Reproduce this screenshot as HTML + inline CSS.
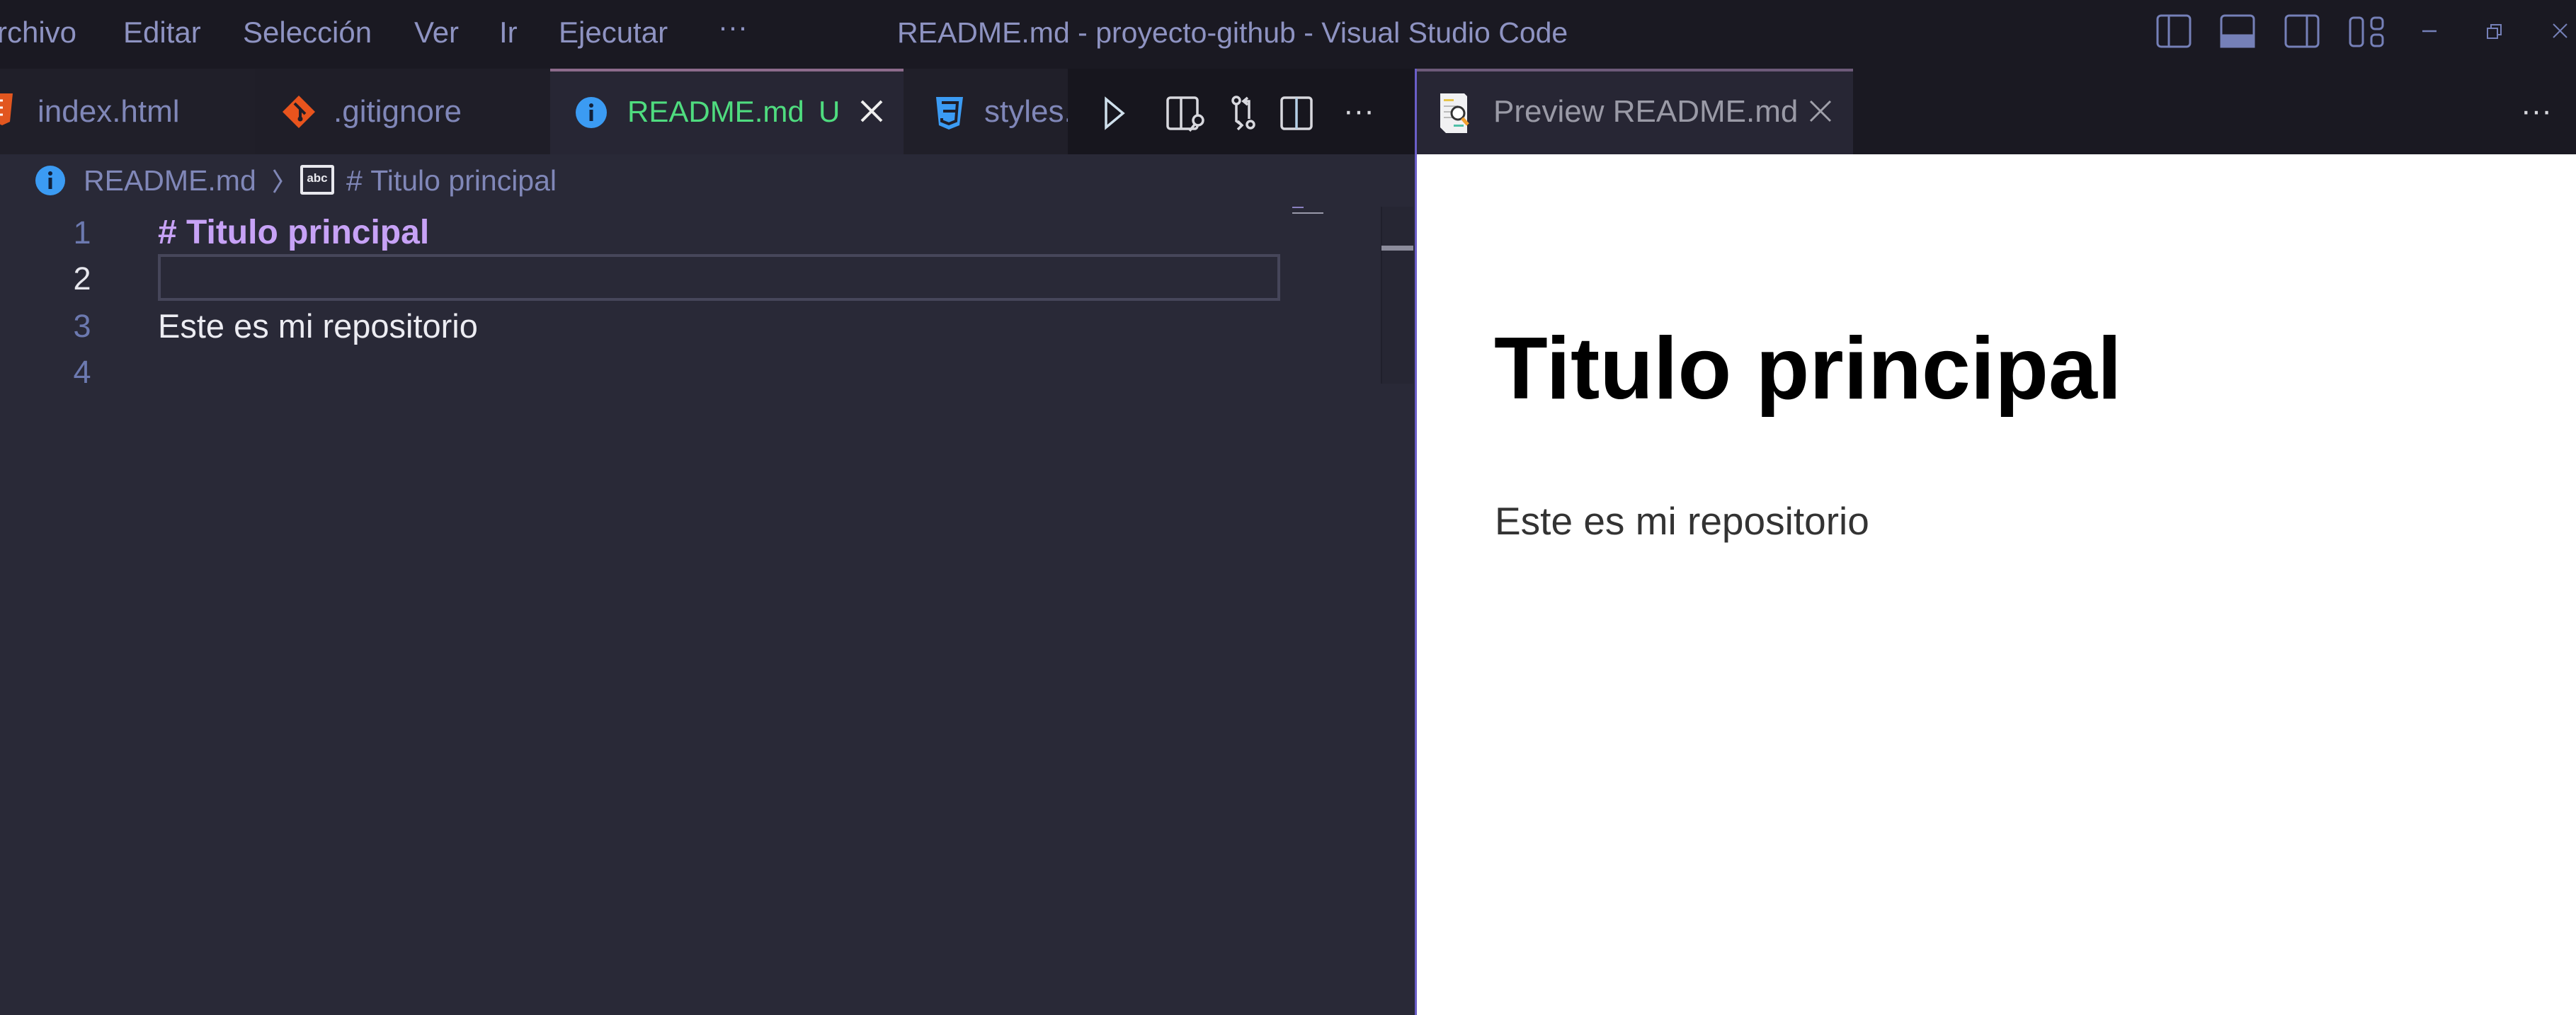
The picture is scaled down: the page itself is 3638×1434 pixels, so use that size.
<!DOCTYPE html>
<html><head><meta charset="utf-8"><style>
*{margin:0;padding:0;box-sizing:border-box}
body{width:3638px;height:1434px;overflow:hidden;background:#1a1922;font-family:"Liberation Sans",sans-serif;position:relative}
.a{position:absolute;white-space:nowrap}
.m{color:#8e93c2;font-size:42px;top:22px;line-height:48px}
.t{font-size:44px;line-height:50px;top:133px;color:#8087b8}
.ln{color:#6c79b0;font-size:45px;width:60px;text-align:center;left:86px;line-height:66px}
.code{font-size:47px;left:223px;line-height:66px;color:#ececf2}
</style></head><body>
<!-- title bar -->
<div class="a m" style="left:-4px">rchivo</div>
<div class="a m" style="left:174px">Editar</div>
<div class="a m" style="left:343px">Selección</div>
<div class="a m" style="left:585px">Ver</div>
<div class="a m" style="left:705px">Ir</div>
<div class="a m" style="left:789px">Ejecutar</div>
<div class="a m" style="left:1014px;top:14px">···</div>
<div class="a m" style="left:1267px;font-size:41px">README.md - proyecto-github - Visual Studio Code</div>
<svg class="a" style="left:3040px;top:15px" width="598" height="60" viewBox="3040 15 598 60" fill="none" stroke="#7580b8" stroke-width="3">
<rect x="3047" y="22" width="46" height="44" rx="5"/><line x1="3063" y1="22" x2="3063" y2="66"/>
<rect x="3137" y="22" width="46" height="44" rx="5"/><rect x="3137" y="50" width="46" height="16" fill="#7580b8"/>
<rect x="3228" y="22" width="46" height="44" rx="5"/><line x1="3258" y1="22" x2="3258" y2="66"/>
<rect x="3319" y="25" width="18" height="40" rx="5"/><rect x="3349" y="25" width="16" height="16" rx="5"/><rect x="3349" y="49" width="16" height="16" rx="5"/>
<line x1="3421" y1="44" x2="3441" y2="44" stroke-width="2.5"/>
<rect x="3513" y="40" width="14" height="14" stroke-width="2"/><path d="M3518 40v-5h14v14h-5" stroke-width="2"/>
<path d="M3606 34l19 19M3625 34l-19 19" stroke-width="2"/>
</svg>
<!-- tab bar -->
<div class="a" style="left:0;top:97px;width:360px;height:121px;background:#201f29"></div>
<div class="a" style="left:360px;top:97px;width:417px;height:121px;background:#1f1e28"></div>
<div class="a" style="left:777px;top:97px;width:499px;height:121px;background:#272634;border-top:4px solid #8d6b8c"></div>
<div class="a" style="left:1276px;top:97px;width:232px;height:121px;background:#201f29"></div>
<div class="a" style="left:1508px;top:97px;width:492px;height:121px;background:#17161e"></div>
<svg class="a" style="left:0;top:130px" width="20" height="50"><path d="M-12 2h30l-4 40l-11 5l-11-5z" fill="#e2561f"/><path d="M4 12h-10M4 22h-10M4 32h-8" stroke="#fff" stroke-width="3"/></svg>
<div class="a t" style="left:53px">index.html</div>
<svg class="a" style="left:397px;top:133px" width="50" height="50" viewBox="0 0 50 50"><path d="M25 2L48 25L25 48L2 25z" fill="#e8541d"/><path d="M19 13l8 8v14M27 21l7 7" stroke="#1f1e28" stroke-width="4" fill="none"/><circle cx="27" cy="35" r="3.5" fill="#1f1e28"/></svg>
<div class="a t" style="left:471px">.gitignore</div>
<svg class="a" style="left:812px;top:136px" width="46" height="46"><circle cx="23" cy="23" r="22" fill="#3b9bf3"/><rect x="20.5" y="19" width="5" height="16" fill="#10203a"/><circle cx="23" cy="13" r="3" fill="#10203a"/></svg>
<div class="a t" style="left:886px;color:#4fdc7f;font-size:42px">README.md</div>
<div class="a t" style="left:1156px;color:#4fdc7f;font-size:42px">U</div>
<svg class="a" style="left:1213px;top:139px" width="36" height="36"><path d="M4 4l28 28M32 4L4 32" stroke="#eeeeee" stroke-width="4"/></svg>
<svg class="a" style="left:1318px;top:133px" width="46" height="52" viewBox="0 0 46 52"><path d="M4 4h38l-5 40l-15 6l-14-6z" fill="#3b9bf3"/><path d="M12 12h22l-2 26l-10 4l-10-4v-4M14 24h18" stroke="#1f1e28" stroke-width="4" fill="none"/></svg>
<div class="a t" style="left:1390px;width:118px;overflow:hidden">styles.css</div>
<svg class="a" style="left:1540px;top:130px" width="440" height="60" fill="none" stroke="#d8d8de" stroke-width="3.5">
<path d="M22 10l24 20l-24 20z" stroke="#cfe0ec"/>
<rect x="109" y="8" width="42" height="44" rx="4"/><line x1="128" y1="8" x2="128" y2="52"/><circle cx="152" cy="40" r="7" fill="#17161e"/><line x1="147" y1="46" x2="140" y2="55"/>
<circle cx="206" cy="12" r="5"/><path d="M206 17v24l8 6M222 8l-6 5l6 5M216 13h8v25"/><circle cx="226" cy="46" r="5"/><path d="M208 41l6 6l-6 6"/>
<rect x="270" y="8" width="42" height="44" rx="4"/><line x1="291" y1="8" x2="291" y2="52" stroke="#b5cfe6"/>
</svg>
<div class="a" style="left:1897px;top:132px;color:#d8d8de;font-size:44px">···</div>
<!-- preview tab -->
<div class="a" style="left:2000px;top:97px;width:617px;height:121px;background:#272634;border-top:4px solid #6d5a79"></div>
<div class="a" style="left:1998px;top:97px;width:3px;height:1337px;background:#6a5ec8"></div>
<svg class="a" style="left:2031px;top:130px" width="60" height="62"><path d="M3 2h34l4 4v52h-30l-8-8z" fill="#f1f1f3"/><rect x="8" y="10" width="14" height="3" fill="#e6c44a"/><path d="M8 20h20M8 28h14M8 36h14" stroke="#bbb" stroke-width="2"/><rect x="22" y="46" width="14" height="3" fill="#4fc0a8"/><circle cx="28" cy="30" r="9" fill="#fff" stroke="#333" stroke-width="3"/><path d="M34 37l8 9" stroke="#f0a030" stroke-width="5"/></svg>
<div class="a t" style="left:2109px;color:#9a9aa6">Preview README.md</div>
<svg class="a" style="left:2554px;top:140px" width="34" height="34"><path d="M3 3l28 28M31 3L3 31" stroke="#a0a0aa" stroke-width="3"/></svg>
<div class="a" style="left:3560px;top:132px;color:#d8d8de;font-size:44px">···</div>
<!-- editor -->
<div class="a" style="left:0;top:218px;width:1998px;height:1216px;background:#292937"></div>
<svg class="a" style="left:49px;top:233px" width="44" height="44"><circle cx="22" cy="22" r="21" fill="#3b9bf3"/><rect x="19.5" y="18" width="5" height="16" fill="#10203a"/><circle cx="22" cy="12" r="3" fill="#10203a"/></svg>
<div class="a t" style="left:118px;top:230px;font-size:41px">README.md</div>
<svg class="a" style="left:383px;top:236px" width="20" height="40"><path d="M4 4l10 16l-10 16" stroke="#7f86b5" stroke-width="3" fill="none"/></svg>
<div class="a" style="left:424px;top:233px;width:48px;height:42px;border:4px solid #e8e8ee;border-radius:3px;color:#e8e8ee;font-size:17px;font-weight:bold;text-align:center;line-height:30px">abc</div>
<div class="a t" style="left:489px;top:230px;font-size:41px">#&nbsp;Titulo principal</div>
<div class="a ln" style="top:296px">1</div>
<div class="a ln" style="top:361px;color:#e8e8ee">2</div>
<div class="a ln" style="top:428px">3</div>
<div class="a ln" style="top:493px">4</div>
<div class="a" style="left:223px;top:359px;width:1585px;height:66px;border:4px solid #46465a"></div>
<div class="a code" style="top:296px;color:#c7a2f6;font-weight:bold;font-size:48px">#&nbsp;Titulo principal</div>
<div class="a code" style="top:428px">Este es mi repositorio</div>
<div class="a" style="left:1825px;top:292px;width:16px;height:2px;background:#8a80c0"></div>
<div class="a" style="left:1825px;top:300px;width:44px;height:2px;background:#9a9aaa"></div>
<div class="a" style="left:1950px;top:292px;width:46px;height:250px;background:#262633;border-left:2px solid #20202c"></div>
<div class="a" style="left:1951px;top:347px;width:45px;height:7px;background:#8c8c9c"></div>
<!-- preview -->
<div class="a" style="left:2001px;top:218px;width:1637px;height:1216px;background:#ffffff"></div>
<div class="a" style="left:2110px;top:451px;font-size:124px;font-weight:bold;color:#000;line-height:140px">Titulo principal</div>
<div class="a" style="left:2111px;top:704px;font-size:55px;color:#333;line-height:64px">Este es mi repositorio</div>
</body></html>
